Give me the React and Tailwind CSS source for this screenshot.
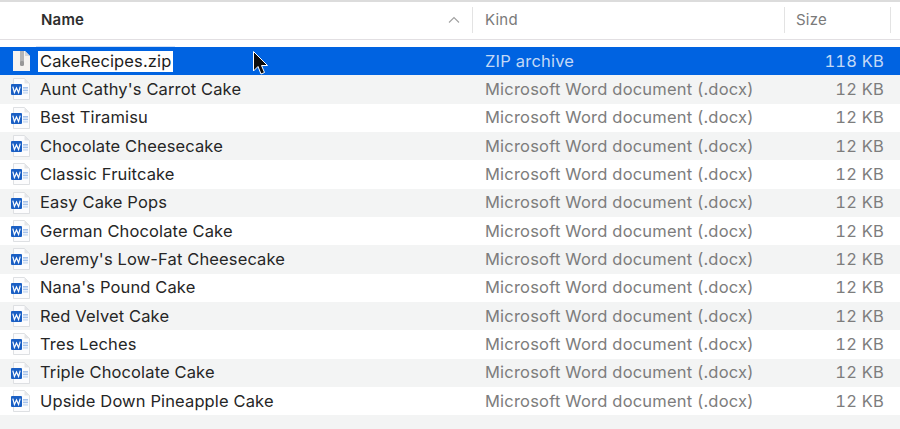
const names = ["Aunt Cathy's Carrot Cake","Best Tiramisu","Chocolate Cheesecake","Classic Fruitcake","Easy Cake Pops","German Chocolate Cake","Jeremy's Low-Fat Cheesecake","Nana's Pound Cake","Red Velvet Cake","Tres Leches","Triple Chocolate Cake","Upside Down Pineapple Cake"];

function WordIcon() {
  return (
    <svg width="21" height="22" viewBox="0 0 21 22" className="block">
      <path d="M3.5 0.5H14.5L19.5 5.5V21.5H3.5Z" fill="#fcfcfd" stroke="#d6d8dc" strokeWidth="0.8" />
      <path d="M14.5 0.5V5.5H19.5Z" fill="#e4e5e8" />
      <rect x="13" y="9" width="5" height="1.6" fill="#a6c2ea" />
      <rect x="13" y="11.6" width="5" height="1.6" fill="#a6c2ea" />
      <rect x="13" y="14.2" width="5" height="1.4" fill="#c8d9f0" />
      <rect x="1" y="6" width="11" height="11" rx="1" fill="#1a5fc4" />
      <path d="M2.8 8.6L4.4 14.6L6.5 10L8.6 14.6L10.2 8.6" fill="none" stroke="#fff" strokeWidth="1.2" />
    </svg>
  );
}

function ZipIcon() {
  return (
    <svg width="20" height="22" viewBox="0 0 20 22" className="block">
      <path d="M3 1H15L20 6V21H3Z" fill="#f5f3f0" />
      <path d="M15 1V6H20Z" fill="#d4d4d4" />
      <rect x="10" y="1" width="4" height="12" fill="#b4b4b4" />
      <rect x="10" y="11" width="4" height="5" rx="1.5" fill="#989898" />
    </svg>
  );
}

function Row({ name, gray }) {
  return (
    <div className={"flex h-[28.33px] items-center " + (gray ? "bg-[#f3f4f4]" : "bg-white")}>
      <div className="w-[473px] flex items-center pl-[10px] shrink-0">
        <WordIcon />
        <span className="ml-[9px] text-[#262626] tracking-[0.13px]">{name}</span>
      </div>
      <div className="w-[312px] pl-[12px] shrink-0 text-[#7d7d7d]">Microsoft Word document (.docx)</div>
      <div className="w-[99px] text-right shrink-0 text-[#7d7d7d] tabular-nums">12 KB</div>
    </div>
  );
}

export default function App() {
  return (
    <div className="relative w-[900px] h-[429px] overflow-hidden bg-[#f3f4f4] font-['Inter','Liberation_Sans',sans-serif] text-[16.5px] tracking-[0.2px]">
      <div className="h-[47px] bg-white">
        <div className="h-[40px] border-t-2 border-b border-[#dcdcdc] border-b-[#e2dfe2] flex items-center text-[15px] pb-[1px]">
          <div className="w-[473px] flex items-center justify-between border-r border-[#e3e3e3] h-[26px] pl-[41px] pr-[12px] shrink-0">
            <span className="font-semibold text-[#2e2e2e]">Name</span>
            <svg width="12" height="8" viewBox="0 0 12 8"><path d="M1 6.5L6 1.5L11 6.5" fill="none" stroke="#a0a0a0" strokeWidth="1.1" /></svg>
          </div>
          <div className="w-[312px] h-[26px] border-r border-[#e3e3e3] pl-[12px] flex items-center text-[#7a7a7a] shrink-0">Kind</div>
          <div className="w-[106px] h-[26px] border-r border-[#e3e3e3] pl-[11px] flex items-center text-[#7a7a7a] shrink-0">Size</div>
        </div>
      </div>
      <div className="flex h-[28.33px] items-center bg-[#0063e1]">
        <div className="w-[473px] flex items-center pl-[10px] shrink-0">
          <ZipIcon />
          <span className="ml-[8px] bg-white text-[#1c1c1c] px-[2px] h-[21px] leading-[21px] tracking-[0.13px]">CakeRecipes.zip</span>
        </div>
        <div className="w-[312px] pl-[12px] shrink-0 text-[#c4d9f6]">ZIP archive</div>
        <div className="w-[99px] text-right shrink-0 text-[#c4d9f6] tabular-nums">118 KB</div>
      </div>
      {names.map((n, i) => <Row key={n} name={n} gray={i % 2 === 0} />)}
      <div className="absolute left-[36px] top-[46px] w-[139px] h-px bg-[#d5e2f6]" />
      <svg className="absolute left-[252px] top-[50px]" width="18" height="28" viewBox="0 0 18 28">
        <path d="M1.5 1.5V21L6 16.5L9 24L12.5 22.5L9.5 15.5H15.5Z" fill="#0c0c0c" stroke="#ffffff" strokeWidth="1" />
      </svg>
    </div>
  );
}
